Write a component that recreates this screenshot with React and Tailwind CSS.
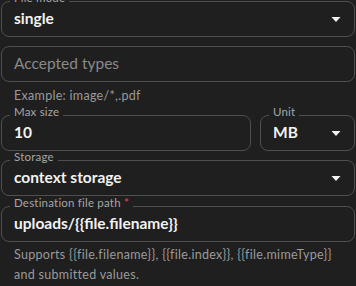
import React from "react";

const font = { fontFamily: '"Lato", "Liberation Sans", sans-serif' };

function Arrow() {
  return (
    <svg width="10" height="5" viewBox="0 0 10 5" className="shrink-0">
      <path d="M0.5 0 L9.5 0 L5 5 Z" fill="#f2f2f2" />
    </svg>
  );
}

function Box({ label, required, children, className = "" }) {
  return (
    <div
      className={
        "relative h-[36px] rounded-[8px] border border-[#4f4f4f] flex items-center pl-[12px] pr-[13px] " +
        className
      }
    >
      {label && (
        <span className="absolute -top-[10px] left-[8px] px-[4px] bg-[#1f1f1f] text-[11.5px] leading-[12px] tracking-[0.2px] text-[#a6a6a6]">
          {label}
          {required && <span className="text-[#e5484d]"> *</span>}
        </span>
      )}
      {children}
    </div>
  );
}

export default function App() {
  return (
    <div
      className="w-[356px] h-[286px] overflow-hidden bg-[#1f1f1f] px-[1px] pt-[1px]"
      style={font}
    >
      <Box label="File mode">
        <span className="flex-1 text-[15.5px] font-bold text-[#f2f2f2]">single</span>
        <Arrow />
      </Box>

      <Box className="mt-[9px]">
        <span className="flex-1 text-[15.5px] text-[#8a8a8a]">Accepted types</span>
      </Box>

      <div className="mt-[7px] pl-[13px] text-[12.5px] leading-[14px] tracking-[0.3px] text-[#9a9a9a]">
        Example: image/*,.pdf
      </div>

      <div className="mt-[12px] flex gap-[9px]">
        <Box label="Max size" className="w-[250px]">
          <span className="flex-1 text-[15.5px] font-bold text-[#f2f2f2]">10</span>
        </Box>
        <Box label="Unit" className="flex-1">
          <span className="flex-1 text-[15.5px] font-bold text-[#f2f2f2]">MB</span>
          <Arrow />
        </Box>
      </div>

      <Box label="Storage" className="mt-[9px]">
        <span className="flex-1 text-[15.5px] font-bold text-[#f2f2f2]">context storage</span>
        <Arrow />
      </Box>

      <Box label="Destination file path" required className="mt-[10px]">
        <span className="flex-1 text-[15.5px] font-bold text-[#f2f2f2]">
          uploads/{"{{file.filename}}"}
        </span>
      </Box>

      <div className="mt-[3px] pl-[13px] pr-[14px] text-[12.5px] leading-[20px] tracking-[0.3px] text-[#9a9a9a]">
        Supports {"{{file.filename}}"}, {"{{file.index}}"}, {"{{file.mimeType}}"} and submitted values.
      </div>
    </div>
  );
}
